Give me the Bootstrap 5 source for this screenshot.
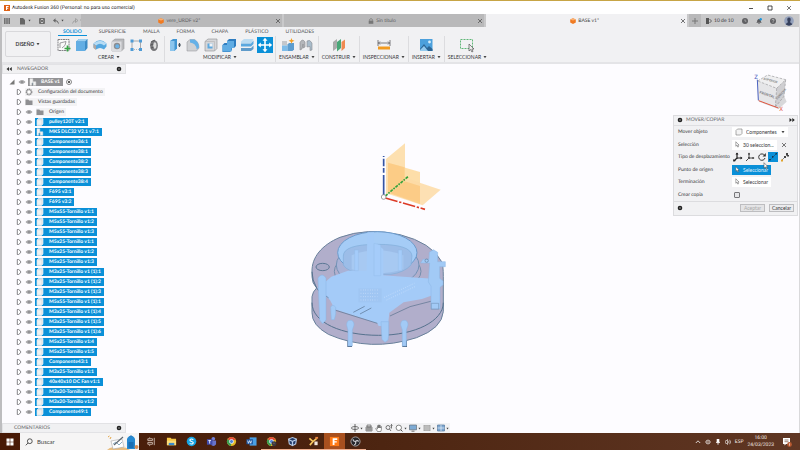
<!DOCTYPE html>
<html lang="es">
<head>
<meta charset="utf-8">
<meta name="viewport" content="width=device-width, initial-scale=1">
<title>Autodesk Fusion 360</title>
<link href="https://cdn.jsdelivr.net/npm/bootstrap@5.3.0/dist/css/bootstrap.min.css" rel="stylesheet">
<style>
:root{--ink:#353538;--blue:#0a90d8;--panel:#f1f1f3}
html{height:100%}
body{min-height:100vh;font:5px/8px Lato,"Liberation Sans",sans-serif;text-rendering:geometricPrecision;color:var(--ink);background:#fdfcff;border-top:1px solid #c7a545;overflow-x:hidden}
button,input,select{font:inherit;color:inherit}
.plain{border:0;background:none;padding:0;display:inline-flex;align-items:center;justify-content:center;gap:2px;color:inherit;text-decoration:none;white-space:nowrap}
svg{display:block;flex:none}
.i6{width:6px;height:6px}.i8{width:8px;height:8px}.i10{width:10px;height:10px}.i16{width:16px;height:16px}
.titlebar{height:13px;padding:0 8px 0 4px;background:#fff;color:#222}
.titletext{font-family:Roboto,sans-serif}
.wincontrols{gap:13px}
.app{border-left:2px solid #bdbdbf;border-right:1px solid #d9d9db}
.tabstrip{height:13px;background:#c9c9ca;gap:2px}
.quick{width:77px;gap:8px;padding-left:2px}
.doc{flex:1 1 0;min-width:0;background:#b9b9ba;color:#626264;padding:0 1px 0 3px}
.doc.on{background:var(--panel);color:#444}
.session{width:110px;gap:8px}
.plus{width:12px;background:#b9b9ba;align-self:stretch;margin-right:-3px}
.ribbon{background:var(--panel);border-bottom:2px solid #e4e4e7;min-height:35px}
.workspace{width:46px;height:26px;margin:4px 3px 0 3px;border:1px solid #d8d8db;border-radius:2px;font-weight:700}
.modes{gap:17px;padding-left:9px;height:9px}
.modes a{color:#58585b;text-decoration:none;height:9px;line-height:10px}
.modes a.on{color:var(--blue);font-weight:700;border-bottom:1px solid var(--blue);margin:0 -5px;padding:0 5px}
.tools{padding:0 2px;border-right:1px solid #dcdcdf}
.tools:last-child{border:0}
.tools .set{gap:2px;height:17px}
.tools .name{padding:0 1px;height:7px}
.tools .hot{background:var(--blue)}
.browser{width:124px}
.strip{height:10px;background:#f0f0f2;border:1px solid #e2e2e5;padding:0 3px 0 3px;color:#66666a;gap:5px}
.tree{padding:3px 0 0 7px}
.tree li{height:10px;gap:3px}
.tree ul li{padding-left:7px}
.soft{background:#f3f3f5;height:8px;padding:0 2px 0 0;display:inline-flex;align-items:center;gap:5px}
.chip{background:var(--blue);color:#fff;font-weight:700;height:8px;padding:0 3px 0 1px;display:inline-flex;align-items:center;gap:5px;margin-left:-1px}
.chip.root{background:#939396;gap:4px}
.viewbar{background:#f2f2f4;height:10px;gap:2px;padding:0 1px}
.viewbar .plain{gap:1px}
.side{width:126px}
.cube{margin:7px 7px 2px auto}
.dialogbox{background:var(--panel);border:1px solid #dcdcdf;margin-right:1px}
.dialogbox .head{height:10px;border-bottom:1px solid #dedee1;padding:0 2px 0 3px;color:#66666a;gap:3px}
.fields{padding:0 4px}
.fields .line{height:12px;white-space:nowrap}
.fields .line+.line{margin-top:1px}
.fields .line:nth-child(even)+.line{margin-top:0}
.fields label,.fields .lab{width:54px;flex:none;margin:0}
.box{height:10px;background:#fff;border:0;padding:0 3px;display:inline-flex;align-items:center;gap:3px}
.box select{border:0;background:none;width:32px;height:9px;padding:0;appearance:none;line-height:8px}
.box.on{background:var(--blue);color:#e2f2fc}
.fields input{width:6px;height:6px;margin:0 0 0 2px;appearance:none;border:1px solid #77777a;border-radius:1px;background:#e6e6e8}
#pointer{right:2px;top:-3px}
.foot{border-top:1px solid #dcdcdf;height:14px;padding:0 3px;gap:4px}
.foot .act{border:1px solid #bdbdc0;background:#ececee;height:8px;width:25px}
.foot .act:disabled{color:#aaa;background:#e4e4e6}
.taskbar{height:17px;background:linear-gradient(90deg,#481a06,#4c2410 45%,#603724);color:#f3e9e4}
.start{width:20px}
.search{width:119px;background:#f6f5f5;color:#444;padding-left:5px;gap:4px}
.search input{border:0;background:none;width:60px;padding:0;font-size:6px}
.search input::placeholder{color:#444;opacity:1}
.apps{padding-left:2px}
.apps .plain{width:20px;border-bottom:1px solid transparent}
.apps .plain.run{width:21px;border-color:#f0b090}
.apps .now{background:#a8501f}
.apps svg{width:11px;height:11px}
.tray{gap:4px;padding-right:8px}
.clock{line-height:7px;text-align:center;font-family:Roboto,sans-serif}
</style>
<script src="https://cdn.jsdelivr.net/npm/bootstrap@5.3.0/dist/js/bootstrap.bundle.min.js"></script>
</head>
<body class="d-flex flex-column">
<svg class="d-none" aria-hidden="true">
<defs>
<symbol id="dn" viewBox="0 0 4 4"><path d="M.5 1h3L2 3.2z" fill="#444"/></symbol>
<symbol id="x" viewBox="0 0 6 6"><path d="M1 1l4 4M5 1L1 5" stroke="#555" stroke-width=".8"/></symbol>
<symbol id="tri" viewBox="0 0 6 6"><path d="M1.3 .5v5h1.300L4.600 3.800V2.200L2.600.5z" fill="#fff" stroke="#66666a" stroke-width=".8"/></symbol>
<symbol id="eye" viewBox="0 0 8 8"><path d="M.5 4Q4-.2 7.5 4 4 8.200.5 4" fill="#a0a0a3"/><circle cx="4" cy="4" r="1.300" fill="#78787c" stroke="#c8c8ca" stroke-width=".5"/></symbol>
<symbol id="body" viewBox="0 0 8 8"><path d="M1 2l1.300-1.400H7V6L5.600 7.400H1z" fill="#d9dde0" stroke="#fff" stroke-width=".6"/><path d="M1.500 2.200h4v4.500h-4z" fill="#f3f1ef"/></symbol>
<symbol id="asm" viewBox="0 0 8 8"><path d="M1 .8h2.800v3h3v3.500H4V5H2.500v2.300H1z" fill="#f2f2f2" stroke="#e4e4e4" stroke-width=".5"/><path d="M3.800 4.500v2.600" stroke="#5a7080" stroke-width=".6"/></symbol>
<symbol id="gear" viewBox="0 0 8 8"><circle cx="4" cy="4" r="2.800" fill="#fff" stroke="#88888b" stroke-width="1.200" stroke-dasharray="1.300 .5"/><circle cx="4" cy="4" r="2.200" fill="none" stroke="#88888b" stroke-width=".7"/></symbol>
<symbol id="fold" viewBox="0 0 8 8"><path d="M.5 1.500h2.800l.8 1h3.400V7h-7z" fill="#8f8f92"/></symbol>
<symbol id="dot" viewBox="0 0 6 6"><circle cx="3" cy="3" r="2.300" fill="#222"/><path d="M2 3h2" stroke="#ddd" stroke-width=".6"/></symbol>
<symbol id="cubeo" viewBox="0 0 6 6"><path d="M3 .2l2.800 1.200v3L3 5.900.2 4.400v-3z" fill="#f07b22"/><path d="M.2 1.400L3 2.600l2.800-1.200L3 .2z" fill="#fbb070"/></symbol>
<symbol id="cur" viewBox="0 0 6 8"><path d="M1 .7v5.400l1.300-1.100 1 2.100.9-.4-.9-2h1.600z" fill="#fff" stroke="#555" stroke-width=".6"/></symbol>
<symbol id="chrome" viewBox="0 0 12 12"><circle cx="6" cy="6" r="5" fill="#e4b928"/><path d="M6 6L1.700 3.500A5 5 0 0 1 10.500 3.800z" fill="#df493a"/><path d="M6 6L1.700 3.500A5 5 0 0 0 5.400 11z" fill="#3c9e50"/><circle cx="6" cy="6" r="2.200" fill="#4f86d8" stroke="#fff" stroke-width=".8"/></symbol>
</defs>
</svg>

<header class="titlebar d-flex align-items-center justify-content-between">
  <div class="plain">
    <svg class="i6" viewBox="0 0 6 6"><path d="M0 0h6v6H0z" fill="#df6215"/><path d="M2 1h2.600v1H3v.8h1.300v1H3V5H2z" fill="#fff"/></svg>
    <span class="titletext">Autodesk Fusion 360 (Personal: no para uso comercial)</span>
  </div>
  <div class="d-flex wincontrols">
    <button class="plain" aria-label="Minimizar"><svg class="i6" viewBox="0 0 6 6"><path d="M1 3.500h4" stroke="#222" stroke-width=".8"/></svg></button>
    <button class="plain" aria-label="Maximizar"><svg class="i6" viewBox="0 0 6 6"><path d="M1 1h4v4H1z" fill="none" stroke="#222" stroke-width=".8"/></svg></button>
    <button class="plain" aria-label="Cerrar"><svg class="i6"><use href="#x"/></svg></button>
  </div>
</header>

<div class="app d-flex flex-column flex-grow-1">
<nav class="tabstrip d-flex">
  <div class="quick d-flex align-items-center">
    <button class="plain" aria-label="Panel de datos"><svg class="i6" viewBox="0 0 6 6"><path d="M0 1h6M0 3h6M0 5h6" stroke="#555" stroke-width="1.400" stroke-dasharray="1.600 .6"/></svg></button>
    <button class="plain" aria-label="Archivo"><svg class="i8" viewBox="0 0 8 8"><path d="M2 1h3l2 2v4.500H2z" fill="#666"/></svg><svg width="3" height="3"><use href="#dn"/></svg></button>
    <button class="plain" aria-label="Guardar"><svg class="i6" viewBox="0 0 6 6"><path d="M.5.5h5v5h-5zM1.500.5v2h3v-2M1.500 5.500v-2h3v2" fill="none" stroke="#666" stroke-width=".9"/></svg></button>
    <button class="plain" aria-label="Deshacer"><svg class="i6" viewBox="0 0 6 6"><path d="M0 2.500L2.500.3v4.400z" fill="#666"/><path d="M2 2.500q3 0 3.500 3" fill="none" stroke="#666" stroke-width="1"/></svg><svg width="3" height="3"><use href="#dn"/></svg></button>
    <button class="plain" aria-label="Rehacer"><svg class="i6" viewBox="0 0 6 6"><path d="M6 2.500L3.500.5v4zM4 2.500Q1 2.500.5 5.500" fill="none" stroke="#999" stroke-width=".8"/></svg><svg width="3" height="3"><use href="#dn"/></svg></button>
  </div>
  <div class="doc d-flex align-items-center"><a href="#" class="plain flex-grow-1"><svg class="i6"><use href="#cubeo"/></svg>vere_URDF v2*</a><button class="plain" aria-label="Cerrar"><svg class="i6"><use href="#x"/></svg></button></div>
  <div class="doc d-flex align-items-center"><a href="#" class="plain flex-grow-1"><svg class="i6" viewBox="0 0 6 6"><path d="M.7 2.600h4.600v3.200H.7z" fill="#777"/><path d="M1.600 2.600V1.500q1.400-2 2.800 0v1.100" fill="none" stroke="#777" stroke-width=".8"/></svg>Sin título</a><button class="plain" aria-label="Cerrar"><svg class="i6"><use href="#x"/></svg></button></div>
  <div class="doc on d-flex align-items-center"><a href="#" class="plain flex-grow-1"><svg class="i6"><use href="#cubeo"/></svg>BASE v1*</a><button class="plain" aria-label="Cerrar"><svg class="i6"><use href="#x"/></svg></button></div>
  <div class="session d-flex align-items-center">
    <button class="plain plus" aria-label="Nuevo diseño"><svg class="i6" viewBox="0 0 6 6"><path d="M3 0v6M0 3h6" stroke="#777" stroke-width="1"/></svg></button>
    <a href="#" class="plain"><svg class="i6" viewBox="0 0 6 6"><path d="M0 0h3v6H0z" fill="#555"/><path d="M3.500 1l2 2-2 2" fill="none" stroke="#555" stroke-width=".9"/></svg>10 de 10</a>
    <button class="plain" aria-label="Estado del trabajo"><svg class="i6" viewBox="0 0 6 6"><circle cx="3" cy="3" r="3" fill="#606063"/><path d="M3 1.300v1.900h1.400" fill="none" stroke="#ccc" stroke-width=".6"/></svg></button>
    <button class="plain" aria-label="Notificaciones"><svg class="i6" viewBox="0 0 6 6"><path d="M.3 4.700Q1.300 4 1.300 2.200 3 0 4.700 2.200q0 1.800 1 2.500zM2.300 5h1.400v.8H2.300z" fill="#5b5b5e"/><circle cx="4.700" cy="1.300" r="1.200" fill="#1b95dc"/></svg></button>
    <button class="plain" aria-label="Ayuda"><svg class="i6" viewBox="0 0 6 6"><circle cx="3" cy="3" r="3" fill="#606063"/><path d="M2 2.300Q2.200 1.200 3 1.200q1.100 0 1.100 1Q3.900 2.800 3 3.300v.5M3 4.300v.7" fill="none" stroke="#ddd" stroke-width=".6"/></svg></button>
    <button class="plain" aria-label="Cuenta"><svg class="i10" viewBox="0 0 10 10"><circle cx="5" cy="5" r="4.800" fill="#93a0bb"/><path d="M1.800 8.600Q2.500 6.500 4 6.300 2.900 4 3.400 2.500 5 .7 6.600 2.500 7.100 4 6 6.300q1.500.2 2.200 2.300-3.200 2.300-6.400 0" fill="#36405c"/></svg></button>
  </div>
</nav>

<section class="ribbon d-flex">
  <button class="plain workspace">DISEÑO <svg width="4" height="4"><use href="#dn"/></svg></button>
  <div>
    <nav class="modes d-flex"><a class="on" href="#">SOLIDO</a><a href="#">SUPERFICIE</a><a href="#">MALLA</a><a href="#">FORMA</a><a href="#">CHAPA</a><a href="#">PLÁSTICO</a><a href="#">UTILIDADES</a></nav>
    <div class="d-flex">
      <div class="tools">
        <div class="set d-flex align-items-center justify-content-center">
          <button class="plain" aria-label="Crear boceto"><svg class="i16" viewBox="0 0 16 16"><path d="M2 2.500h11v11H2z" fill="#fafafa" stroke="#77777a" stroke-width=".9" stroke-dasharray="2 .5"/><path d="M4 11V6l6-1.500Q10 9 6 11" fill="none" stroke="#77777a" stroke-width=".7"/><path d="M11.500 8.500v6M8.500 11.500h6" stroke="#38a545" stroke-width="1.700"/></svg></button>
          <button class="plain" aria-label="Extruir"><svg class="i16" viewBox="0 0 16 16"><path d="M2 4.500L5 2h8.500v9L11 14H2z" fill="#3d8cc6"/><path d="M2 4.500L5 2h8.500L11 4.500z" fill="#9bd0f2"/><path d="M2 4.500h9V14H2z" fill="#62aee4"/></svg></button>
          <button class="plain" aria-label="Revolución"><svg class="i16" viewBox="0 0 16 16"><path d="M1.500 6.500Q8 0 14.500 6.500v3l-2.500 3Q8 9.500 4 12.500l-2.500-2z" fill="#55a8e0"/><path d="M1.500 6.500Q8 1 14.500 6.500L12 8.500Q8 5 4 8.500z" fill="#b7dcf4"/><path d="M1.500 7v4l2.500 2V8.500z" fill="#b0a8a4"/></svg></button>
          <button class="plain" aria-label="Agujero"><svg class="i16" viewBox="0 0 16 16"><path d="M2 4.500L5 2h9v9.500L11.500 14H2z" fill="#b9babd" stroke="#8a8a8d" stroke-width=".5"/><path d="M2 4.500h9.500V14H2z" fill="#dcdde0"/><circle cx="7" cy="9" r="3.200" fill="#8b8d91"/><circle cx="7.300" cy="9.300" r="2" fill="#6bb2e6"/></svg></button>
          <button class="plain" aria-label="Patrón"><svg class="i16" viewBox="0 0 16 16"><path d="M4 13V4h8.500v8.500" fill="none" stroke="#a0a0a3" stroke-width=".9"/><path d="M4 12.500h7" stroke="#a0a0a3" stroke-width=".7" stroke-dasharray="1 1"/><path d="M2.500 2.500h3v3h-3zM11 2.500h3v3h-3zM2.500 11h3v3h-3zM11 11h3v3h-3z" fill="#4e9bd6"/></svg></button>
          <button class="plain" aria-label="Rosca"><svg class="i16" viewBox="0 0 16 16"><ellipse cx="8" cy="8.500" rx="3.900" ry="5.500" fill="#77777a"/><ellipse cx="8.800" cy="8.500" rx="1.600" ry="3.300" fill="#dcdcdc"/><path d="M5 5l4-2M4.400 8l3-1M4.800 11l3-.8" stroke="#4f4f52" stroke-width=".8"/></svg></button>
        </div>
        <button class="plain name w-100">CREAR <svg width="4" height="4"><use href="#dn"/></svg></button>
      </div>
      <div class="tools">
        <div class="set d-flex align-items-center justify-content-center">
          <button class="plain" aria-label="Pulsar/tirar"><svg class="i16" viewBox="0 0 16 16"><path d="M3 4l3-2h4v9.500L7.500 14H3z" fill="#4296d2"/><path d="M3 4h4.500v10H3z" fill="#8bc5ed"/><path d="M11 8h3M12.500 6v4" stroke="#44515c" stroke-width="1.200"/></svg></button>
          <button class="plain" aria-label="Empalme"><svg class="i16" viewBox="0 0 16 16"><path d="M2 5l3-2.500h4.500Q14 5 14 11l-2.500 3H2z" fill="#cfd1d4" stroke="#8d8d90" stroke-width=".5"/><path d="M5 2.500h4.500Q14 5 14 10.500l-2.300 2Q11 6 5 5.500z" fill="#65b1e8"/></svg></button>
          <button class="plain" aria-label="Vaciado"><svg class="i16" viewBox="0 0 16 16"><path d="M2 4.500L5 2h9v9.500L11.500 14H2z" fill="#d5d6d9" stroke="#8d8d90" stroke-width=".6"/><path d="M4.500 6.500h5v5h-5z" fill="#5da9df"/><path d="M6.500 6.500h3v3h-3z" fill="#f2f3f5"/><path d="M2 4.500h9.500V14" fill="none" stroke="#aaa" stroke-width=".5"/></svg></button>
          <button class="plain" aria-label="Combinar"><svg class="i16" viewBox="0 0 16 16"><path d="M6 4l2-2h7v7l-2 2h-2v2l-2 2H1.500V8l2-2H6z" fill="#2f7dc0"/><path d="M6 4h7v7h-2.500v3.500h-9V8H6z" fill="#60ace3"/></svg></button>
          <button class="plain" aria-label="Desfase"><svg class="i16" viewBox="0 0 16 16"><path d="M2 4.500L5 2h9.500l-2 4H2z" fill="#bcdcf2"/><path d="M2 6.500h10l2.500-3V7L12 9.500H2z" fill="#5ba8df"/><path d="M2 11h10l2.500-2.500V12L12 14H2z" fill="#5f9bca"/></svg></button>
          <button class="plain hot" aria-label="Desplazar"><svg class="i16" viewBox="0 0 16 16"><path d="M8 2v12M2 8h12" stroke="#fff" stroke-width="1.600"/><path d="M8 .8l2.500 3h-5zM8 15.200l2.500-3h-5zM.8 8l3-2.500v5zM15.200 8l-3-2.500v5z" fill="#fff"/></svg></button>
        </div>
        <button class="plain name w-100">MODIFICAR <svg width="4" height="4"><use href="#dn"/></svg></button>
      </div>
      <div class="tools">
        <div class="set d-flex align-items-center justify-content-center">
          <button class="plain" aria-label="Nuevo componente"><svg class="i16" viewBox="0 0 16 16"><path d="M2 4h5v4.500H2z" fill="#c4c7cb"/><path d="M2 8.500h5.500V14H2z" fill="#7dbce9"/><path d="M7.500 7.500L9 6h5v6.500L12.500 14h-5z" fill="#5d9dcf"/><path d="M11.500 1l.8 2 2.200.8-2.200.9-.8 2-.8-2-2.200-.9 2.200-.8z" fill="#f5a021"/></svg></button>
          <button class="plain" aria-label="Unión"><svg class="i16" viewBox="0 0 16 16"><path d="M2 13V5.500Q4.500 1 7 5v5l-2 1V7L4 12z" fill="#b5b7bb" stroke="#86888c" stroke-width=".6"/><path d="M9 4q3-2 5 2v7l-2 .5V9.500L9 10z" fill="#a9bccb" stroke="#8a8c90" stroke-width=".6"/></svg></button>
        </div>
        <button class="plain name w-100">ENSAMBLAR <svg width="4" height="4"><use href="#dn"/></svg></button>
      </div>
      <div class="tools">
        <div class="set d-flex align-items-center justify-content-center"><button class="plain" aria-label="Plano de desfase"><svg class="i16" viewBox="0 0 16 16"><path d="M2 5l4-3v9l-4 3z" fill="#aaa"/><path d="M6 5l4-3v9l-4 3.500z" fill="#49a777"/><path d="M10.500 5L14 2.500V11l-3.500 3z" fill="#f08a51"/></svg></button></div>
        <button class="plain name w-100">CONSTRUIR <svg width="4" height="4"><use href="#dn"/></svg></button>
      </div>
      <div class="tools">
        <div class="set d-flex align-items-center justify-content-center"><button class="plain" aria-label="Medir"><svg class="i16" viewBox="0 0 16 16"><path d="M2 3v6M14 3v6M2 6h12M4 4.500L2.500 6 4 7.500M12 4.500L13.500 6 12 7.500" fill="none" stroke="#606063" stroke-width=".8"/><path d="M2 9.500h12v3H2z" fill="#f29b20"/></svg></button></div>
        <button class="plain name w-100">INSPECCIONAR <svg width="4" height="4"><use href="#dn"/></svg></button>
      </div>
      <div class="tools">
        <div class="set d-flex align-items-center justify-content-center"><button class="plain" aria-label="Insertar imagen"><svg class="i16" viewBox="0 0 16 16"><path d="M2 2h12.500v12H2z" fill="#4ca0dc"/><path d="M2 12l4-5 3 4 2-2 3.500 3v2H2z" fill="#2b6595"/><path d="M2 13l4-4 4 5H2z" fill="#93c9ee"/><circle cx="11.500" cy="5" r="1.400" fill="#d9effc"/></svg></button></div>
        <button class="plain name w-100">INSERTAR <svg width="4" height="4"><use href="#dn"/></svg></button>
      </div>
      <div class="tools">
        <div class="set d-flex align-items-center justify-content-center"><button class="plain" aria-label="Seleccionar"><svg class="i16" viewBox="0 0 16 16"><path d="M1.500 2.500h12v9h-12z" fill="none" stroke="#4fb069" stroke-width=".9" stroke-dasharray="2 1"/><path d="M10 7v7l1.700-1.500 1.200 2.500 1.100-.6-1.100-2.400H15z" fill="#eee" stroke="#555" stroke-width=".7"/></svg></button></div>
        <button class="plain name w-100">SELECCIONAR <svg width="4" height="4"><use href="#dn"/></svg></button>
      </div>
    </div>
  </div>
</section>

<main class="d-flex flex-grow-1">
  <aside class="browser d-flex flex-column">
    <div class="strip d-flex align-items-center"><svg class="i6" viewBox="0 0 6 6"><path d="M3 1v4L.5 3zM5.800 1v4L3.300 3z" fill="#333"/></svg><span class="flex-grow-1">NAVEGADOR</span><svg class="i6"><use href="#dot"/></svg></div>
    <ul class="tree list-unstyled mb-0">
      <li class="d-flex align-items-center"><button class="plain" aria-label="Contraer"><svg class="i6" viewBox="0 0 6 6"><path d="M5.500.5v5h-5z" fill="#777"/></svg></button><svg class="i8"><use href="#eye"/></svg><span class="chip root"><svg class="i8"><use href="#asm"/></svg>BASE v1</span><svg class="i6" viewBox="0 0 6 6"><circle cx="3" cy="3" r="2.500" fill="#fff" stroke="#555" stroke-width=".7"/><circle cx="3" cy="3" r="1.100" fill="#333"/></svg></li>
      <li><ul class="list-unstyled" id="nodes"></ul></li>
    </ul>
    <div class="strip d-flex align-items-center mt-auto"><span class="flex-grow-1 ps-2">COMENTARIOS</span><svg class="i6"><use href="#dot"/></svg></div>
  </aside>

  <section class="flex-grow-1 d-flex flex-column align-items-center">
    <div class="flex-grow-1 d-flex align-items-center">
    <svg width="200" height="216" viewBox="300 135 200 216" role="img" aria-label="Modelo BASE">
      <g transform="translate(360 130) scale(.3333)">
        <path d="M78 87L135 40v110l-57 42z" fill="#fde0b0"/>
        <path d="M84 98l96 28v90l-96-28z" fill="#fddaa0" fill-opacity=".9"/>
        <path d="M78 190l70-42 94 31-54 47z" fill="#fddba6" fill-opacity=".85"/>
        <path d="M84 98l50 14v40l-50 36zM134 154l46 14v54L90 190z" fill="#fbc67a" fill-opacity=".7"/>
        <path d="M71 197V78" stroke="#3455a4" stroke-width="5" stroke-dasharray="62 7 14 5 23 5"/>
        <path d="M76 198l68-58" stroke="#35a13a" stroke-width="5" stroke-dasharray="9 3 5 3"/>
        <path d="M76 204l119 34" stroke="#dc3a26" stroke-width="5" stroke-dasharray="38 5 7 5"/>
        <circle cx="71" cy="201" r="7" fill="#fff" stroke="#8c8c8c" stroke-width="2.500"/>
      </g>
      <g transform="translate(290 220) scale(.3333)">
        <g fill="#4f6886"><path d="M172 345h14v36h-14zM337 345h14v36h-14z"/></g>
        <path d="M66 155C65 112 95 75 150 52Q230 22 330 44 425 68 455 125q5 10 5 45v105q-4 50-80 78-140 45-265-10-50-28-49-65v-48q2-15 14-26-14-14-14-34z" fill="#b1aecb" stroke="#68819b" stroke-width="3"/>
        <path d="M66 155q0 25 14 49 40 40 110 50M66 248c0 60 90 98 200 98s194-43 194-98" fill="none" stroke="#55718e" stroke-width="3"/>
        <ellipse cx="263" cy="154" rx="130" ry="64" fill="none" stroke="#728ead" stroke-width="3"/>
        <ellipse cx="263" cy="135" rx="124" ry="69" fill="#a9b2d6" stroke="#7292b6" stroke-width="3"/>
        <ellipse cx="262" cy="98" rx="119" ry="63" fill="#a5ccf6" stroke="#6b9bcc" stroke-width="3"/>
        <path d="M160 108q0-35 102-35t104 35l-3 27q-20 22-60 28h-80q-52-8-63-28z" fill="#9cbde8" stroke="#80add9" stroke-width="2"/>
        <path d="M185 106q75-30 155 0v42q-75 24-155 0z" fill="#a7c9f2"/>
        <path d="M232 37h20v27l28 24v78l60 4 100 7-4 46-40 14-55 10-43 31-4 40H266l-4-8-128-42-14-28-38-34 42-36 50-18h56z" fill="#a4cbf8"/>
        <path d="M134 270l128 40M300 288l60-28 70-18M80 207l36 27M190 277l34-18M210 282l34-18" fill="none" stroke="#566f8d" stroke-width="2"/>
        <path d="M205 205h70v42h-70z" fill="#97bce9" fill-opacity=".3"/>
        <path d="M283 232l90-42M290 240l85-40M212 210h55M212 220h55M212 230h50M212 240h50" stroke="#deecff" stroke-width="2" stroke-dasharray="2 5"/>
        <g fill="#a2caf6" stroke="#8ab7e4" stroke-width="1.500">
          <path d="M418 97l12-8 13 8v28h23v15h-17v35l10 8v12l-9 7v64h-27v-68l-8-12 4-57h-27l7-11h18zM84 174q12-18 24 0v126l-10 11-9-11zM273 305h23v40l-2 15-9 7-9-9zM170 315q0-14 11-14t11 14l-5 15v48h-13v-48zM332 315q0-14 11-14t11 14l-5 15v48h-12v-48zM122 262q5-12 15 0v20l-4 17h-9z"/>
        </g>
        <path d="M194 90h11v62h-11zM325 90h11v62h-11zM252 70l20 5v92h-20z" fill="#a5ccfa" stroke="#90b9e4"/>
        <ellipse cx="98" cy="141" rx="20" ry="11" fill="#a8a9c6" stroke="#5b7795" stroke-width="3"/>
        <circle cx="410" cy="122" r="5" fill="none" stroke="#64819f" stroke-width="2"/>
        <path d="M424 250h22v18h-22z" fill="none" stroke="#7599bd" stroke-width="2"/>
      </g>
    </svg>
    </div>
    <div class="viewbar d-flex align-items-center">
      <button class="plain" aria-label="Órbita"><svg class="i8" viewBox="0 0 8 8"><path d="M4 0v8" stroke="#555" stroke-width=".9"/><ellipse cx="4" cy="4" rx="3.600" ry="1.500" fill="none" stroke="#555" stroke-width=".8"/></svg><svg width="3" height="3"><use href="#dn"/></svg></button>
      <button class="plain" aria-label="Mirar a"><svg class="i8" viewBox="0 0 8 8"><path d="M1 3h6v4H1zM2 1h4v2H2zM1 5h6M3 3v4M5 3v4" fill="#ddd" stroke="#666" stroke-width=".7"/></svg></button>
      <button class="plain" aria-label="Encuadre"><svg class="i8" viewBox="0 0 8 8"><path d="M2.500 7.500L.7 4.500l.8-.4 1 .9V1.700h.9V4 1h1v3-2.600h1V4l1-1.500v3L5.800 7.500z" fill="#fff" stroke="#555" stroke-width=".6"/></svg></button>
      <button class="plain" aria-label="Zoom"><svg class="i8" viewBox="0 0 8 8"><circle cx="3" cy="3.500" r="2" fill="none" stroke="#555" stroke-width=".8"/><path d="M4.500 5L6 7M6.500.5v4M5.500 1.500l1-1 1 1" fill="none" stroke="#555" stroke-width=".8"/></svg></button>
      <button class="plain" aria-label="Ajustar"><svg class="i8" viewBox="0 0 8 8"><circle cx="3.800" cy="3.800" r="2.700" fill="#fff" stroke="#666" stroke-width=".8"/><path d="M5.700 5.700l1.800 1.800" stroke="#555" stroke-width="1"/></svg><svg width="3" height="3"><use href="#dn"/></svg></button>
      <button class="plain" aria-label="Visualización"><svg class="i8" viewBox="0 0 8 8"><path d="M.5 1h7v4.800h-7z" fill="#7daad4" stroke="#66707a" stroke-width=".7"/><path d="M2.500 7.200h3" stroke="#555" stroke-width=".8"/></svg><svg width="3" height="3"><use href="#dn"/></svg></button>
      <button class="plain" aria-label="Rejilla"><svg class="i8" viewBox="0 0 8 8"><path d="M.5 1h7v6h-7z" fill="#aaa"/><path d="M.5 3h7M.5 5h7M3 1v6M5 1v6" stroke="#ddd" stroke-width=".4"/></svg><svg width="3" height="3"><use href="#dn"/></svg></button>
      <button class="plain" aria-label="Ventanas"><svg class="i8" viewBox="0 0 8 8"><path d="M.5 1h7v6h-7z" fill="#7ea6d0" stroke="#55789f" stroke-width=".7"/><path d="M.5 4h7M4 1v6" stroke="#e7f0fa" stroke-width=".7"/></svg><svg width="3" height="3"><use href="#dn"/></svg></button>
    </div>
  </section>

  <aside class="side">
    <svg class="cube" width="40" height="42" viewBox="670 210 120 126" role="img" aria-label="Vista frontal">
      <path d="M690 302l60 22 24-22-8-18-60 4z" fill="#d8d8da"/>
      <path d="M687 240l30-18 54 14-27 26z" fill="#efeff0"/>
      <path d="M687 240l57 22-4 56-52-20z" fill="#e6e6e8"/>
      <path d="M744 262l27-26-5 50-26 32z" fill="#cfcfd2"/>
      <path d="M687 240l30-18 54 14-27 26zM744 262l-4 56M771 236l-5 50-26 32" fill="none" stroke="#9a9a9d" stroke-width="2" stroke-dasharray="8 4"/>
      <path d="M686 236l3 62" stroke="#4b62c0" stroke-width="3"/><path d="M690 299l59 22" stroke="#e1553f" stroke-width="3"/>
      <g font-family="Roboto, sans-serif" font-weight="700"><text x="677" y="234" font-size="18" font-weight="400" fill="#4b62c0">Z</text><text x="752" y="330" font-size="18" font-weight="400" fill="#e1553f">X</text>
      <text transform="translate(692 277) rotate(19)" font-size="11" fill="#858588">FRONTAL</text><text transform="translate(704 236) rotate(14)" font-size="9" fill="#858588">SUPERIOR</text><text transform="translate(746 296) rotate(-48)" font-size="9" fill="#858588">DERECHA</text></g>
    </svg>
    <form class="dialogbox">
      <div class="head d-flex align-items-center"><svg class="i6"><use href="#dot"/></svg><span class="flex-grow-1">MOVER/COPIAR</span><svg class="i6" viewBox="0 0 6 6"><path d="M.5 1v4L3 3zM3.300 1v4l2.500-2z" fill="#222"/></svg></div>
      <div class="fields">
        <div class="line d-flex align-items-center"><label for="obj">Mover objeto</label><div class="box"><svg class="i8" viewBox="0 0 8 8"><path d="M1 2.500L2.500 1H7v4.500L5.500 7H1z" fill="#f4f4f4" stroke="#777" stroke-width=".6"/></svg><select id="obj"><option>Componentes</option></select><svg width="4" height="4"><use href="#dn"/></svg></div></div>
        <div class="line d-flex align-items-center"><span class="lab">Selección</span><button type="button" class="box"><svg width="5" height="7"><use href="#cur"/></svg>30 seleccion...</button><button type="button" class="plain ms-1" aria-label="Borrar selección"><svg class="i6"><use href="#x"/></svg></button></div>
        <div class="line d-flex align-items-center"><span class="lab">Tipo de desplazamiento</span><div class="d-flex">
          <button type="button" class="plain" aria-label="Forma libre"><svg width="12" height="10" viewBox="0 0 12 10"><path d="M5 1v6M5 6h5M5 6L2 9" stroke="#222" stroke-width="1.200"/><path d="M3.500 2.500L5 .5l1.500 2zM8.500 4.500l2 1.500-2 1.500zM1.500 7l-.5 2.500L4 9z" fill="#222"/></svg></button>
          <button type="button" class="plain" aria-label="Traslación"><svg width="12" height="10" viewBox="0 0 12 10"><path d="M5 1v4M6 6h4M4 7L2 9" stroke="#333" stroke-width=".9"/><path d="M4 2.500L5 .5l1 2zM8.500 5l2 1-2 1z" fill="#222"/><circle cx="5" cy="6" r=".9"/></svg></button>
          <button type="button" class="plain" aria-label="Rotar"><svg width="12" height="10" viewBox="0 0 12 10"><path d="M8.500 3.200A3.200 3.200 0 1 0 9 6" fill="none" stroke="#333" stroke-width="1"/><path d="M9.800 1v3.500H6.500z" fill="#333"/></svg></button>
          <button type="button" class="plain box on p-0" aria-label="Punto a punto"><svg width="10" height="10" viewBox="0 0 10 10"><path d="M2 8l6-6" stroke="#153a54" stroke-width=".8" stroke-dasharray="1.500 1"/><path d="M1 7h1.500v1.500H1zM7.500 1H9v1.500H7.500zM4 4h1.500v1.500H4z" fill="#153a54"/></svg></button>
          <button type="button" class="plain" aria-label="Punto a posición"><svg width="12" height="10" viewBox="0 0 12 10"><path d="M4 8l6-6" stroke="#555" stroke-width=".7"/><path d="M3 7.500h2v2H3z" fill="#e0a32c"/><path d="M8 1h2v2H8zM6 4h2v2H6zM9 3h2v1.500H9z" fill="#444"/></svg></button></div></div>
        <div class="line d-flex align-items-center"><span class="lab">Punto de origen</span><button type="button" class="box on position-relative"><svg width="5" height="7"><use href="#cur"/></svg>Seleccionar<svg class="position-absolute" width="6" height="8" id="pointer"><use href="#cur"/></svg></button></div>
        <div class="line d-flex align-items-center"><span class="lab">Terminación</span><button type="button" class="box"><svg width="5" height="7"><use href="#cur"/></svg>Seleccionar</button></div>
        <div class="line d-flex align-items-center"><label for="copy">Crear copia</label><input id="copy" type="checkbox"></div>
      </div>
      <div class="foot d-flex align-items-center"><svg class="i6 me-auto"><use href="#dot"/></svg><button type="button" class="plain act" disabled>Aceptar</button><button type="button" class="plain act">Cancelar</button></div>
    </form>
  </aside>
</main>
</div>

<footer class="taskbar d-flex">
  <button class="plain start" aria-label="Inicio"><svg class="i8" viewBox="0 0 8 8"><path d="M.5.5h3.200v3.200H.5zM4.300.5h3.200v3.200H4.300zM.5 4.300h3.200v3.200H.5zM4.300 4.300h3.200v3.200H4.300z" fill="#fff"/></svg></button>
  <div class="search d-flex align-items-center"><svg class="i8" viewBox="0 0 8 8"><circle cx="4.800" cy="3.200" r="2.400" fill="none" stroke="#444" stroke-width=".9"/><path d="M3 5L.8 7.300" stroke="#444" stroke-width=".9"/></svg><input type="search" placeholder="Buscar" aria-label="Buscar">
    <svg class="ms-auto" width="32" height="16" viewBox="0 0 32 16"><path d="M0 16q4-4 9-2 8-3 14 2z" fill="#e8bd80"/><path d="M4 7l11-2 2 8-11 2z" fill="#fff" stroke="#a9a9a9" stroke-width=".6"/><path d="M6 10l3-2 3 3 3-3" fill="none" stroke="#6c99b8" stroke-width=".8"/><path d="M7 11l9-8" stroke="#5e6870" stroke-width="1.200"/><path d="M1 3l1.500-1M3 5l1-2" stroke="#e4a341" stroke-width="1"/><path d="M20 15V5q1-3 4-3t4 3v10z" fill="#2589d2"/><path d="M21.500 8h5v6h-5z" fill="#1b6fb5"/><path d="M22.500 3q1.500-3 3 0" fill="none" stroke="#1b6fb5"/><circle cx="29.500" cy="13" r="2" fill="#d98f57"/></svg></div>
  <nav class="apps d-flex">
    <button class="plain" aria-label="Vista de tareas"><svg viewBox="0 0 12 12"><path d="M2 3h5v2H2zM2 7h5v2H2zM9 2v8M4 1.500v1M4 10v1" fill="none" stroke="#d9c8bf" stroke-width=".9"/></svg></button>
    <button class="plain" aria-label="Explorador"><svg viewBox="0 0 12 12"><path d="M1 2h4l1 1h5v7H1z" fill="#f6c544"/><path d="M1 5h10v5H1z" fill="#fbdc78"/><path d="M3 7.500h6V10H3z" fill="#3d8bcc"/></svg></button>
    <button class="plain" aria-label="Skype"><svg viewBox="0 0 12 12"><circle cx="6" cy="6" r="5.200" fill="#16a3e2"/><path d="M8 4Q6 2.700 4.500 3.700 3.700 5.300 6 5.900q2.600.7 1.600 2.200Q5.800 9.300 4 8" fill="none" stroke="#fff" stroke-width="1.200"/></svg></button>
    <button class="plain" aria-label="Teams"><svg viewBox="0 0 12 12"><circle cx="8" cy="3" r="2" fill="#7581d8"/><path d="M5 5h6v4q-2 3-5 1z" fill="#6873ca"/><path d="M1 3.500h6v6H1z" fill="#414bac"/><path d="M2.500 5h3M4 5v3.300" stroke="#fff" stroke-width=".9"/></svg></button>
    <button class="plain" aria-label="Chrome"><svg><use href="#chrome"/></svg></button>
    <button class="plain" aria-label="Word"><svg viewBox="0 0 12 12"><path d="M4 1.500h7.500v9H4z" fill="#4a9fe4"/><path d="M.5 3.500h7v5.500h-7z" fill="#1c57a5"/><path d="M1.800 5l.9 3L4 5l1.200 3 .9-3" fill="none" stroke="#fff" stroke-width=".8"/></svg></button>
    <button class="plain run" aria-label="Chrome, segundo perfil"><svg viewBox="0 0 12 12"><use href="#chrome" width="12" height="12"/><circle cx="8.700" cy="8.500" r="2.700" fill="#3c3a42"/><path d="M7.500 8q1-1.500 2.500 0" fill="#d9ad8c"/></svg></button>
    <button class="plain run" aria-label="VirtualBox"><svg viewBox="0 0 12 12"><path d="M6 1l5 2-1 6-4 2.300L2 9 1 3z" fill="#b9cce6"/><path d="M2.500 3.500L6 5.200l3.500-1.700L6 2.200zM2.500 5l2.800 1.300v3.200L3 8.300zM9.500 5L6.700 6.300v3.200L9 8.300z" fill="#203866"/></svg></button>
    <button class="plain run" aria-label="Brazo"><svg viewBox="0 0 12 12"><path d="M1.500 2.500l4 3.500 4-3.500M5.500 6L2 10" fill="none" stroke="#f6c65e" stroke-width="1.800"/><path d="M7 6h3.500v4H7z" fill="#f3e7dc"/><path d="M8 1h3v2H8z" fill="#e9813e"/></svg></button>
    <button class="plain run now" aria-label="Fusion 360"><svg viewBox="0 0 12 12"><path d="M1 1h10v10H1z" fill="#ff7a16"/><path d="M4 2.500h5v1.800H6v1.300h2.500v1.600H6v2.500H4z" fill="#fff"/></svg></button>
    <button class="plain run" aria-label="OBS"><svg viewBox="0 0 12 12"><circle cx="6" cy="6" r="5" fill="#26262a" stroke="#c5c5c8" stroke-width=".8"/><path d="M6 6Q3 6 3.500 3.500M6 6q2-2 3.500 0M6 6q1 3-1.500 3.500" fill="none" stroke="#d0d0d3" stroke-width="1.200"/></svg></button>
  </nav>
  <div class="tray d-flex align-items-center ms-auto">
    <button class="plain" aria-label="Iconos ocultos"><svg class="i6" viewBox="0 0 6 6"><path d="M.8 4L3 1.800 5.200 4" fill="none" stroke="#fff" stroke-width=".8"/></svg></button>
    <svg class="i6" viewBox="0 0 6 6"><path d="M1 2q2-2 4 0v2q-2 2-4 0zM2 3h2" fill="none" stroke="#fff" stroke-width=".7"/></svg>
    <svg class="i6" viewBox="0 0 6 6"><path d="M2 0h2v3.500H2zM1 3q2 2.500 4 0M3 4.500V6" fill="#fff" stroke="#fff" stroke-width=".6"/></svg>
    <svg class="i6" viewBox="0 0 6 6"><path d="M0 2h1l1.500-1.500v5L1 4H0zM3.500 1.800q1 1.200 0 2.400M4.600.8q2 2.200 0 4.400" fill="none" stroke="#fff" stroke-width=".6"/></svg>
    <span>ESP</span>
    <div class="clock">16:00<br>24/03/2023</div>
    <button class="plain ms-1" aria-label="Notificaciones del sistema"><svg class="i10" viewBox="0 0 10 10"><path d="M1 1h7v6H4L2.500 8.500V7H1z" fill="#fff"/><path d="M2.500 3h4M2.500 4.700h4" stroke="#603724" stroke-width=".6"/><circle cx="7.500" cy="7.500" r="2.400" fill="#b85a31"/><path d="M7.500 6.300v2.400" stroke="#fff" stroke-width=".6"/></svg></button>
  </div>
</footer>
<script>
const icon = (id, size = 8) => `<svg class="i${size}"><use href="#${id}"/></svg>`;
const expander = `<button class="plain" aria-label="Expandir">${icon('tri', 6)}</button>`;
const parts = ['pulley120T v2:1','MKS DLC32 V2.1 v7:1','Componente36:1','Componente38:1','Componente38:2','Componente38:3','Componente38:4','F695 v3:1','F695 v3:2','M5x55-Tornillo v1:1','M5x55-Tornillo v1:2','M5x55-Tornillo v1:3','M5x25-Tornillo v1:1','M5x25-Tornillo v1:2','M5x25-Tornillo v1:3','M3x25-Tornillo v1 (1):1','M3x25-Tornillo v1 (1):2','M3x25-Tornillo v1 (1):3','M5x55-Tornillo v1 (1):1','M3x25-Tornillo v1 (1):4','M3x25-Tornillo v1 (1):5','M3x25-Tornillo v1 (1):6','M5x25-Tornillo v1:4','M5x25-Tornillo v1:5','Componente43:1','M3x25-Tornillo v1:1','40x40x10 DC Fan v1:1','M3x20-Tornillo v1:1','M3x20-Tornillo v1:2','Componente49:1'];
const row = inner => `<li class="d-flex align-items-center">${expander}${inner}</li>`;
document.getElementById('nodes').innerHTML =
  row(`<span class="soft">${icon('gear')}Configuración del documento</span>`) +
  row(`<span class="soft">${icon('fold')}Vistas guardadas</span>`) +
  row(`${icon('eye')}<span class="soft">${icon('fold')}Origen</span>`) +
  parts.map(p => row(`${icon('eye')}<span class="chip">${icon(p.startsWith('MKS') ? 'asm' : 'body')}${p}</span>`)).join('');
</script>
</body>
</html>
